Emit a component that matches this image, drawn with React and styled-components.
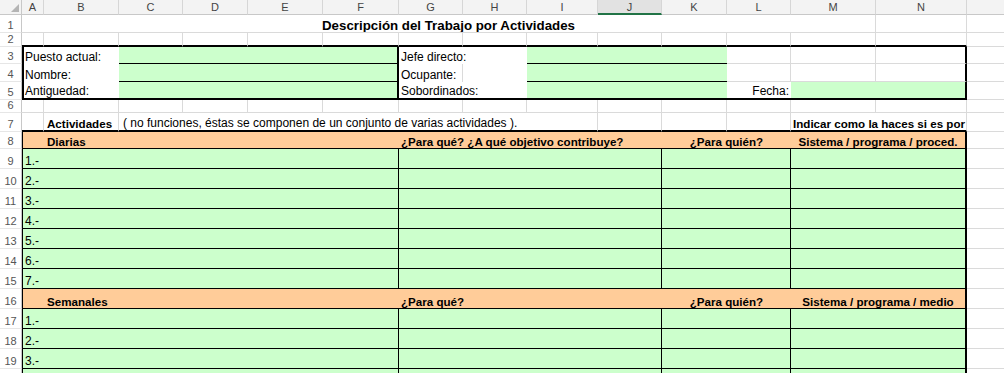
import React from 'react';
import styled, { createGlobalStyle } from 'styled-components';

const GREEN = '#ccffcc';
const ORANGE = '#ffcc99';

const lines = {
  grid: '1px solid #dadada',
  thin: '1px solid #000',
  thick: '2px solid #000',
  none: '0 none',
};

const GlobalStyle = createGlobalStyle`
  *, *::before, *::after { box-sizing: border-box; }
  html, body { margin: 0; padding: 0; background: #fff; overflow: hidden; }
`;

const Sheet = styled.div`
  display: grid;
  grid-template-columns: 22px 22px 75px 64px 65px 75px 76px 64px 64px 71px 64px 65px 64px 85px 91px 80px;
  grid-template-rows: 15px 18px 14px 17px 18px 18px 13px 19px 17px repeat(12, 20px);
  font-family: "Liberation Sans", Arial, sans-serif;
  font-size: 12px;
  color: #000;
`;

const Corner = styled.div`
  display: flex;
  align-items: flex-end;
  justify-content: flex-end;
  padding: 0 2px 2px 0;
  background: #f3f3f3;
  border-right: 1px solid #c8c8c8;
  border-bottom: 1px solid #c8c8c8;
`;

const ColHead = styled.div`
  display: flex;
  align-items: center;
  justify-content: center;
  background: ${p => (p.$sel ? '#e2e2e2' : '#f3f3f3')};
  border-right: 1px solid #d6d6d6;
  border-bottom: ${p => (p.$sel ? '2px solid #217346' : '1px solid #c8c8c8')};
  color: #444;
  font-size: 11px;
`;

const RowHead = styled.div`
  display: flex;
  align-items: flex-end;
  justify-content: center;
  background: #fff;
  border-right: 1px solid #c8c8c8;
  border-bottom: 1px solid #e6e6e6;
  color: #555;
  font-size: 11px;
  line-height: 11px;
  padding-bottom: 1px;
`;

const Cell = styled.div`
  grid-column: span ${p => p.$span || 1};
  display: flex;
  align-items: flex-end;
  justify-content: ${p =>
    p.$align === 'center' ? 'center' : p.$align === 'right' ? 'flex-end' : 'flex-start'};
  min-width: 0;
  padding: 0 2px 0 ${p => p.$indent || 2}px;
  background: ${p => p.$bg || 'transparent'};
  border-right: ${p => lines[p.$r || 'grid']};
  border-bottom: ${p => lines[p.$b || 'grid']};
  border-left: ${p => lines[p.$l || 'none']};
  font-weight: ${p => (p.$bold ? 700 : 400)};
  font-size: ${p => (p.$title ? '13.3px' : p.$bold ? '11.6px' : '12px')};
  line-height: 13px;
  white-space: nowrap;
  overflow: hidden;
`;

const letters = ['A', 'B', 'C', 'D', 'E', 'F', 'G', 'H', 'I', 'J', 'K', 'L', 'M', 'N', ''];

const plain = n => Array.from({ length: n }, () => ({}));

const section = (name, purpose, forWhom, system) => [
  { bg: ORANGE, l: 'thin', r: 'none', b: 'thin' },
  { span: 5, text: name, bold: true, indent: 3, bg: ORANGE, r: 'none', b: 'thin' },
  { span: 4, text: purpose, bold: true, bg: ORANGE, r: 'none', b: 'thin' },
  { span: 2, text: forWhom, bold: true, align: 'center', bg: ORANGE, r: 'none', b: 'thin' },
  { span: 2, text: system, bold: true, align: 'center', bg: ORANGE, r: 'thick', b: 'thin' },
  {},
];

const activity = n => [
  { span: 6, text: `${n}.-`, bg: GREEN, l: 'thin', r: 'thin', b: 'thin' },
  { span: 4, bg: GREEN, r: 'thin', b: 'thin' },
  { span: 2, bg: GREEN, r: 'thin', b: 'thin' },
  { span: 2, bg: GREEN, r: 'thick', b: 'thin' },
  {},
];

const rows = [
  {
    h: '1',
    cells: [
      { span: 13, text: 'Descripción del Trabajo por Actividades', title: true, bold: true, align: 'center' },
      {},
      {},
    ],
  },
  { h: '2', cells: Array.from({ length: 14 }, () => ({ b: 'thick' })).concat([{}]) },
  {
    h: '3',
    cells: [
      { span: 2, text: 'Puesto actual:', bg: '#fff', l: 'thick', r: 'none', b: 'none', indent: 1 },
      { span: 4, bg: GREEN, r: 'thick', b: 'thin' },
      { span: 2, text: 'Jefe directo:', bg: '#fff', r: 'none', b: 'none' },
      { span: 3, bg: GREEN, r: 'none', b: 'thin' },
      {},
      {},
      { r: 'thick' },
      {},
    ],
  },
  {
    h: '4',
    cells: [
      { span: 2, text: 'Nombre:', bg: '#fff', l: 'thick', r: 'none', b: 'none', indent: 1 },
      { span: 4, bg: GREEN, r: 'thick', b: 'thin' },
      { text: 'Ocupante:', b: 'none' },
      { r: 'none', b: 'none' },
      { span: 3, bg: GREEN, r: 'none', b: 'thin' },
      {},
      {},
      { r: 'thick' },
      {},
    ],
  },
  {
    h: '5',
    cells: [
      { span: 2, text: 'Antiguedad:', bg: '#fff', l: 'thick', r: 'none', b: 'thick', indent: 1 },
      { span: 4, bg: GREEN, r: 'thick', b: 'thick' },
      { span: 2, text: 'Sobordinados:', bg: '#fff', r: 'none', b: 'thick' },
      { span: 3, bg: GREEN, r: 'none', b: 'thick' },
      { text: 'Fecha:', align: 'right', bg: '#fff', r: 'none', b: 'thick' },
      { span: 2, bg: GREEN, r: 'thick', b: 'thick' },
      {},
    ],
  },
  { h: '6', cells: plain(15) },
  {
    h: '7',
    cells: [
      { b: 'thick' },
      { text: 'Actividades', bold: true, indent: 3, b: 'thick' },
      { span: 7, text: '( no funciones, éstas se componen de un conjunto de varias actividades ).', indent: 4, b: 'thick' },
      { b: 'thick' },
      { b: 'thick' },
      { b: 'thick' },
      { span: 2, text: 'Indicar como la haces si es por', bold: true, b: 'thick' },
      {},
    ],
  },
  {
    h: '8',
    cells: section('Diarias', '¿Para qué? ¿A qué objetivo contribuye?', '¿Para quién?', 'Sistema / programa / proced.'),
  },
  ...[1, 2, 3, 4, 5, 6, 7].map((n, i) => ({ h: String(9 + i), cells: activity(n) })),
  {
    h: '16',
    cells: section('Semanales', '¿Para qué?', '¿Para quién?', 'Sistema / programa / medio'),
  },
  ...[1, 2, 3].map((n, i) => ({ h: String(17 + i), cells: activity(n) })),
  {
    h: '',
    cells: [
      { span: 6, bg: GREEN, l: 'thin', r: 'thin', b: 'thin' },
      { span: 4, bg: GREEN, r: 'thin', b: 'thin' },
      { span: 2, bg: GREEN, r: 'thin', b: 'thin' },
      { span: 2, bg: GREEN, r: 'thick', b: 'thin' },
      {},
    ],
  },
];

export default function App() {
  return (
    <>
      <GlobalStyle />
      <Sheet>
        <Corner>
          <svg width="8" height="8" viewBox="0 0 8 8">
            <polygon points="8,0 8,8 0,8" fill="#b4b4b4" />
          </svg>
        </Corner>
        {letters.map((l, i) => (
          <ColHead key={i} $sel={l === 'J'}>
            {l}
          </ColHead>
        ))}
        {rows.map((row, r) => (
          <React.Fragment key={r}>
            <RowHead>{row.h}</RowHead>
            {row.cells.map((c, i) => (
              <Cell
                key={i}
                $span={c.span}
                $bg={c.bg}
                $r={c.r}
                $b={c.b}
                $l={c.l}
                $bold={c.bold}
                $title={c.title}
                $align={c.align}
                $indent={c.indent}
              >
                {c.text}
              </Cell>
            ))}
          </React.Fragment>
        ))}
      </Sheet>
    </>
  );
}
